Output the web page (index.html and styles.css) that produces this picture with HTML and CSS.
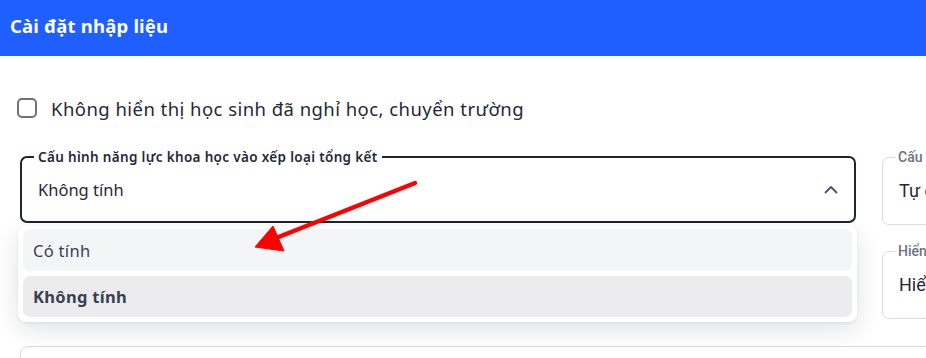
FILE: index.html
```html
<!DOCTYPE html>
<html lang="vi">
<head>
<meta charset="utf-8">
<link rel="stylesheet" href="styles.css">
</head>
<body>
<header class="topbar">Cài đặt nhập liệu</header>
<main class="content">
  <label class="check-row">
    <span class="checkbox"></span>
    <span class="check-label">Không hiển thị học sinh đã nghỉ học, chuyển trường</span>
  </label>
  <div class="grid">
    <div class="col-main">
      <div class="select-wrap">
        <fieldset class="field active">
          <legend>Cấu hình năng lực khoa học vào xếp loại tổng kết</legend>
          <div class="field-row">
            <span class="value">Không tính</span>
            <svg class="chev" width="14" height="9" viewBox="0 0 14 9"><path d="M1.5 7.5 L7 2 L12.5 7.5" fill="none" stroke="#4b5563" stroke-width="1.8" stroke-linecap="round" stroke-linejoin="round"/></svg>
          </div>
        </fieldset>
        <ul class="menu">
          <li class="opt">Có tính</li>
          <li class="opt selected">Không tính</li>
        </ul>
        <svg class="arrow" width="200" height="90" viewBox="0 0 200 90">
          <line x1="179" y1="13" x2="40" y2="68" stroke="#ff0000" stroke-width="4.5" stroke-linecap="round"/>
          <polygon points="19,77 37,56 48,81" fill="#ff0000" stroke="#ff0000" stroke-width="1" stroke-linejoin="round"/>
        </svg>
      </div>
    </div>
    <div class="col-side">
      <fieldset class="field light">
        <legend>Cấu hình</legend>
        <div class="field-row"><span class="value">Tự động</span></div>
      </fieldset>
      <fieldset class="field light">
        <legend>Hiển thị</legend>
        <div class="field-row"><span class="value">Hiển thị</span></div>
      </fieldset>
    </div>
  </div>
  <div class="bottom-field"></div>
</main>
</body>
</html>
```
FILE: styles.css
```css
* { box-sizing: border-box; }
html, body { margin: 0; padding: 0; }
body {
  width: 926px;
  height: 358px;
  overflow: hidden;
  background: #ffffff;
  font-family: "Noto Sans", "Inter", sans-serif;
  color: #1f2937;
}
.topbar {
  height: 56px;
  background: #1f5eff;
  color: #fff;
  font-weight: 700;
  font-size: 18.5px;
  letter-spacing: 0.2px;
  line-height: 52px;
  padding-left: 10px;
}
.content {
  padding: 0 0 0 20px;
}
.check-row {
  display: flex;
  align-items: center;
  gap: 14px;
  margin-top: 41px;
  height: 22px;
}
.checkbox {
  width: 20px;
  height: 20px;
  margin-left: -3px;
  border: 2px solid #6b7280;
  border-radius: 5px;
}
.check-label {
  font-size: 18.5px;
  letter-spacing: 0.45px;
  color: #1f2937;
}
.grid {
  display: flex;
  gap: 26px;
  margin-top: 31px;
}
.col-main { width: 836px; flex: none; }
.col-side { flex: 1; display: flex; flex-direction: column; gap: 19px; }
.select-wrap { position: relative; }
.field {
  margin: 0;
  padding: 0 16px;
  border-radius: 7px;
  min-width: 0;
}
.field legend {
  padding: 0 4px;
  margin-left: -4px;
  font-size: 13px;
  line-height: 14px;
  white-space: nowrap;
}
.field.active {
  border: 2px solid #1e2530;
  height: 73px;
}
.field.active legend {
  font-weight: 600;
  font-size: 13.5px;
  letter-spacing: 0.33px;
  color: #1f2937;
}
.field-row {
  display: flex;
  align-items: center;
  justify-content: space-between;
  height: 50px;
}
.value { font-size: 16.5px; color: #1f2937; white-space: nowrap; }
.menu {
  position: absolute;
  left: -2px;
  top: 76px;
  width: 839px;
  margin: 0;
  padding: 3px 5px 5px;
  list-style: none;
  background: #fff;
  border-radius: 8px;
  box-shadow: 0 8px 24px rgba(17, 24, 39, 0.12), 0 1px 3px rgba(17, 24, 39, 0.08);
  display: flex;
  flex-direction: column;
  gap: 5px;
}
.opt {
  height: 42px;
  display: flex;
  align-items: center;
  padding-left: 10px;
  border-radius: 7px;
  background: #f4f5f7;
  font-size: 16.5px;
  letter-spacing: 0.3px;
  color: #374151;
}
.opt.selected {
  background: #ececee;
  font-weight: 700;
  color: #374151;
  height: 41px;
}
.arrow {
  position: absolute;
  left: 216px;
  top: 20px;
}
.field.light {
  border: 1px solid #d8dbe0;
  height: 75px;
  width: 100px;
  font-family: "Roboto", sans-serif;
}
.field.light legend {
  color: #6b7280;
  font-size: 14px;
  line-height: 15px;
  margin-left: -4px;
  padding: 0 3px;
  font-weight: 500;
}
.field.light .value { color: #1f2937; font-size: 18px; }
.bottom-field {
  margin-top: 27px;
  margin-right: -20px;
  height: 40px;
  border: 1px solid #d8dbe0;
  border-radius: 8px;
}
```
